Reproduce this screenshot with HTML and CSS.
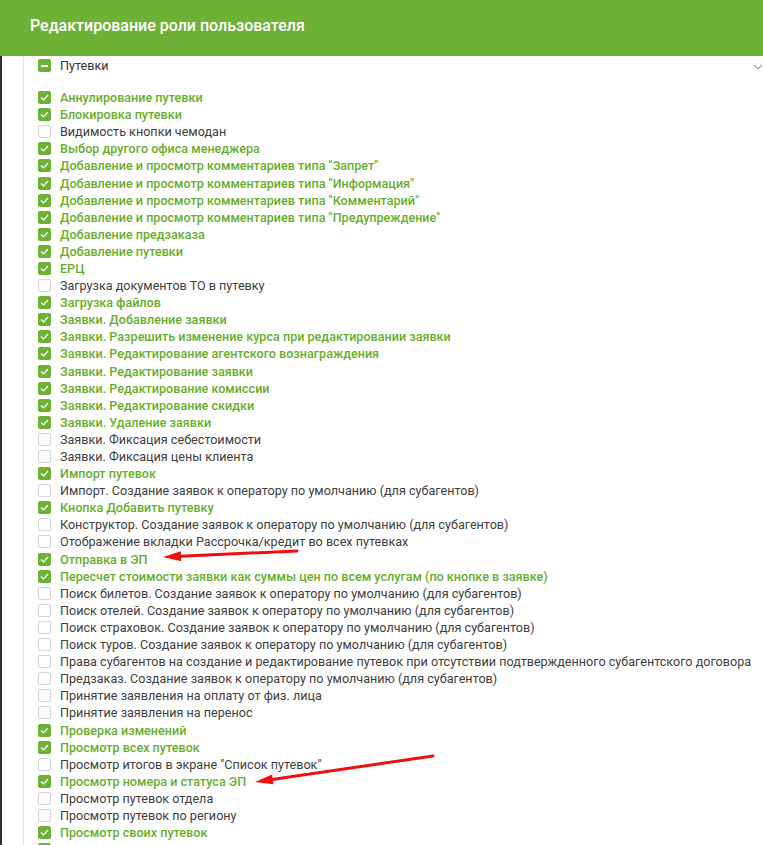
FILE: index.html
```html
<!DOCTYPE html>
<html lang="ru">
<head>
<meta charset="UTF-8" />
<title>Редактирование роли пользователя</title>
<link rel="stylesheet" href="styles.css">
</head>
<body>
  <div class="dialog">
    <div class="dialog-header">Редактирование роли пользователя</div>
    <div class="dialog-body">
      <div class="tree">
        <div class="group-row">
          <span class="box partial"></span>
          <span class="label">Путевки</span>
          <svg class="chevron" width="10" height="6" viewBox="0 0 10 6"><path d="M1 1 L5 5 L9 1" fill="none" stroke="#9a9a9a" stroke-width="1.2"/></svg>
        </div>
        <div class="items" id="items"></div>
      </div>
    </div>
    <!-- red annotation arrows drawn over the list -->
    <svg class="arrows" width="763" height="845" viewBox="0 0 763 845">
      <line x1="297" y1="551" x2="180" y2="556.2" stroke="#f00f0f" stroke-width="3" stroke-linecap="round"/>
      <polygon points="163,557 180.8,551.2 181.2,561.2" fill="#f00f0f"/>
      <line x1="433" y1="756" x2="272" y2="779.5" stroke="#f00f0f" stroke-width="3" stroke-linecap="round"/>
      <polygon points="255,782 272.1,774.4 273.5,784.3" fill="#f00f0f"/>
    </svg>
  </div>

<script>
const items = [
  ["Аннулирование путевки", 1],
  ["Блокировка путевки", 1],
  ["Видимость кнопки чемодан", 0],
  ["Выбор другого офиса менеджера", 1],
  ["Добавление и просмотр комментариев типа \"Запрет\"", 1],
  ["Добавление и просмотр комментариев типа \"Информация\"", 1],
  ["Добавление и просмотр комментариев типа \"Комментарий\"", 1],
  ["Добавление и просмотр комментариев типа \"Предупреждение\"", 1],
  ["Добавление предзаказа", 1],
  ["Добавление путевки", 1],
  ["ЕРЦ", 1],
  ["Загрузка документов ТО в путевку", 0],
  ["Загрузка файлов", 1],
  ["Заявки. Добавление заявки", 1],
  ["Заявки. Разрешить изменение курса при редактировании заявки", 1],
  ["Заявки. Редактирование агентского вознаграждения", 1],
  ["Заявки. Редактирование заявки", 1],
  ["Заявки. Редактирование комиссии", 1],
  ["Заявки. Редактирование скидки", 1],
  ["Заявки. Удаление заявки", 1],
  ["Заявки. Фиксация себестоимости", 0],
  ["Заявки. Фиксация цены клиента", 0],
  ["Импорт путевок", 1],
  ["Импорт. Создание заявок к оператору по умолчанию (для субагентов)", 0],
  ["Кнопка Добавить путевку", 1],
  ["Конструктор. Создание заявок к оператору по умолчанию (для субагентов)", 0],
  ["Отображение вкладки Рассрочка/кредит во всех путевках", 0],
  ["Отправка в ЭП", 1],
  ["Пересчет стоимости заявки как суммы цен по всем услугам (по кнопке в заявке)", 1],
  ["Поиск билетов. Создание заявок к оператору по умолчанию (для субагентов)", 0],
  ["Поиск отелей. Создание заявок к оператору по умолчанию (для субагентов)", 0],
  ["Поиск страховок. Создание заявок к оператору по умолчанию (для субагентов)", 0],
  ["Поиск туров. Создание заявок к оператору по умолчанию (для субагентов)", 0],
  ["Права субагентов на создание и редактирование путевок при отсутствии подтвержденного субагентского договора", 0],
  ["Предзаказ. Создание заявок к оператору по умолчанию (для субагентов)", 0],
  ["Принятие заявления на оплату от физ. лица", 0],
  ["Принятие заявления на перенос", 0],
  ["Проверка изменений", 1],
  ["Просмотр всех путевок", 1],
  ["Просмотр итогов в экране \"Список путевок\"", 0],
  ["Просмотр номера и статуса ЭП", 1],
  ["Просмотр путевок отдела", 0],
  ["Просмотр путевок по региону", 0],
  ["Просмотр своих путевок", 1],
  ["Просмотр чужих путевок", 1]
];

const check = '<svg width="9" height="7" viewBox="0 0 9 7"><path d="M1 3.5 L3.5 6 L8 1" fill="none" stroke="#fff" stroke-width="1.2"/></svg>';
document.getElementById("items").innerHTML = items.map(([text, on]) =>
  `<div class="item${on ? " checked" : ""}"><span class="box">${on ? check : ""}</span><span class="label">${text}</span></div>`
).join('');
</script>
</body>
</html>
```

FILE: styles.css
```css
body {
  margin: 0;
  font-family: Roboto, "Noto Sans", sans-serif;
  background: #fff;
  color: #404040;
  overflow: hidden;
}

.dialog {
  position: relative;
  width: 763px;
  height: 845px;
  display: flex;
  flex-direction: column;
  overflow: hidden;
}

.dialog-header {
  height: 56px;
  flex-shrink: 0;
  box-sizing: border-box;
  padding: 14px 0 0 30px;
  background: #6db235;
  color: #fff;
  font-size: 16px;
  line-height: 24px;
  font-weight: 500;
}

.dialog-body {
  flex: 1;
  border-left: 2px solid #2f2f2f;
  padding-left: 21px;
}

.tree {
  border-left: 1px solid #e3e3e3;
  height: 100%;
  padding-left: 14px;
}

.group-row {
  display: flex;
  align-items: center;
  height: 17px;
  margin-top: 1px;
  font-size: 12.6px;
  color: #333;
}

.chevron {
  margin-left: auto;
  margin-top: 2px;
}

.items {
  margin-top: 15px;
}

.item {
  display: flex;
  align-items: center;
  height: 17.1px;
  font-size: 12.6px;
  white-space: nowrap;
}

.item.checked .label {
  color: #69ae2e;
  font-weight: 500;
}

.box {
  width: 13px;
  height: 13px;
  box-sizing: border-box;
  border: 1px solid #d4d4d4;
  border-radius: 2px;
  margin-right: 9px;
  flex-shrink: 0;
  display: flex;
  align-items: center;
  justify-content: center;
  background: #fff;
}

.item.checked .box,
.box.partial {
  background: #6db235;
  border-color: #6db235;
}

.box.partial::after {
  content: "";
  width: 7px;
  height: 2px;
  background: #fff;
}

.arrows {
  position: absolute;
  left: 0;
  top: 0;
  pointer-events: none;
}
```
